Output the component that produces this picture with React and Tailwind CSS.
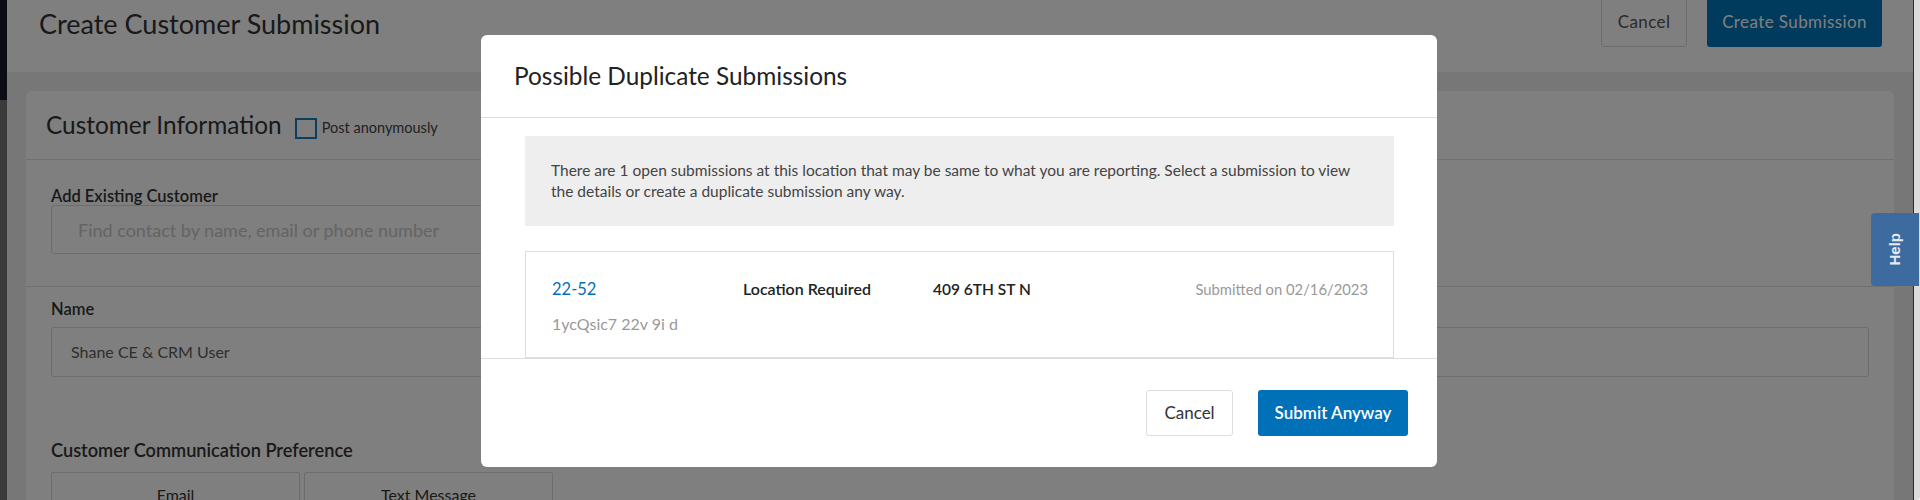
export default function App() {
  return (
    <div className="relative flex h-[500px] w-full overflow-hidden font-['Lato',sans-serif] text-[#333]">
      {/* left window strip */}
      <div className="flex w-[7px] shrink-0 flex-col">
        <div className="h-[100px] bg-[#18182a]" />
        <div className="flex-1 bg-[#747474]" />
      </div>

      <main className="flex min-w-0 flex-1 flex-col bg-[#eeeeee]">
        <header className="flex h-[72px] shrink-0 items-start justify-between bg-white pl-[32px] pr-[31px]">
          <h1 className="pt-[11px] text-[27px] leading-[26px] text-[#333]">Create Customer Submission</h1>
          <div className="-mt-[3px] flex gap-[20px]">
            <button className="h-[50px] w-[86px] rounded-[3px] border border-[#d8d8d8] bg-white text-[17px] tracking-[0.4px] text-[#555]">
              Cancel
            </button>
            <button className="h-[50px] w-[175px] rounded-[3px] bg-[#0074b8] text-[17px] tracking-[0.4px] text-white">
              Create Submission
            </button>
          </div>
        </header>

        <section className="mx-[19px] mt-[19px] flex-1 rounded-t-[6px] bg-white">
          <div className="flex h-[69px] items-center border-b border-[#e0e0e0] pl-[20px]">
            <h2 className="text-[24.4px] leading-[24px] text-[#333]">Customer Information</h2>
            <label className="ml-[13px] mt-[6px] flex items-center gap-[5px]">
              <span className="h-[21px] w-[22px] border-2 border-[#1a7cc4]" />
              <span className="text-[14.5px] text-[#444]">Post anonymously</span>
            </label>
          </div>

          <div className="border-b border-[#e0e0e0] px-[25px] pb-[32px] pt-[27px]">
            <div className="text-[16.5px] font-semibold leading-[18px]">Add Existing Customer</div>
            <input
              readOnly
              placeholder="Find contact by name, email or phone number"
              className="h-[49px] w-[900px] rounded-[3px] border border-[#dadada] px-[26px] text-[18px] outline-none placeholder:text-[#c8c8c8]"
            />
          </div>

          <div className="px-[25px] pt-[13px]">
            <div className="text-[16.5px] font-semibold leading-[18px]">Name</div>
            <div className="mt-[9px] flex h-[50px] items-center rounded-[3px] border border-[#dadada] pl-[19px] text-[16px] text-[#5c5c5c]">
              Shane CE &amp; CRM User
            </div>
            <div className="mt-[62px] text-[18.2px] font-semibold leading-[22px]">Customer Communication Preference</div>
            <div className="mt-[11px] flex gap-[4px]">
              <div className="flex h-[46px] w-[249px] items-center justify-center rounded-[2px] border border-[#dadada] text-[16px]">
                Email
              </div>
              <div className="flex h-[46px] w-[249px] items-center justify-center rounded-[2px] border border-[#dadada] text-[16px]">
                Text Message
              </div>
            </div>
          </div>
        </section>
      </main>

      {/* scrollbar */}
      <div className="w-[7px] shrink-0 rounded-br-[3px] border-l border-[#2b2b2b] bg-[#dcdcdc]" />

      {/* backdrop */}
      <div className="absolute inset-y-0 left-0 right-[7px] bg-black/50" />

      {/* help tab */}
      <div className="absolute right-[1px] top-[213px] flex h-[73px] w-[48px] items-center justify-center rounded-l-[4px] bg-[#3d6b9f]">
        <span className="rotate-180 font-['Liberation_Sans',sans-serif] text-[15px] font-bold text-[#e4eaf2] [writing-mode:vertical-rl]">
          Help
        </span>
      </div>

      {/* dialog */}
      <div className="absolute left-[481px] top-[35px] flex h-[432px] w-[956px] flex-col overflow-hidden rounded-[6px] bg-white">
        <div className="flex h-[83px] shrink-0 items-center border-b border-[#dddddd] pl-[33px]">
          <h3 className="text-[24.4px] leading-[26px] text-[#222]">Possible Duplicate Submissions</h3>
        </div>

        <div className="h-[240px] shrink-0 overflow-hidden pl-[44px] pr-[43px] pt-[18px]">
          <div className="flex h-[90px] items-center bg-[#eeeeee] pl-[26px]">
            <p className="text-[15.5px] leading-[21px] text-[#444]">
              There are 1 open submissions at this location that may be same to what you are reporting. Select a submission to view
              <br />
              the details or create a duplicate submission any way.
            </p>
          </div>

          <div className="mt-[25px] h-[107px] border border-[#dddddd] pl-[26px] pr-[25px] pt-[25px]">
            <div className="flex items-baseline">
              <span className="w-[191px] text-[16.5px] leading-[22px] text-[#0070b8]">22-52</span>
              <span className="w-[190px] text-[16px] font-semibold text-[#222]">Location Required</span>
              <span className="flex-1 text-[15.5px] font-semibold text-[#222]">409 6TH ST N</span>
              <span className="text-[14.8px] text-[#999]">Submitted on 02/16/2023</span>
            </div>
            <div className="mt-[13px] text-[16px] leading-[20px] text-[#999]">1ycQsic7 22v 9i d</div>
          </div>
        </div>

        <div className="flex flex-1 items-center justify-end gap-[25px] border-t border-[#dddddd] pr-[29px]">
          <button className="h-[46px] w-[87px] rounded-[3px] border border-[#dddddd] bg-white text-[17px] text-[#333]">
            Cancel
          </button>
          <button className="h-[46px] w-[150px] rounded-[3px] bg-[#0070b8] text-[17px] font-semibold text-white">
            Submit Anyway
          </button>
        </div>
      </div>
    </div>
  );
}
